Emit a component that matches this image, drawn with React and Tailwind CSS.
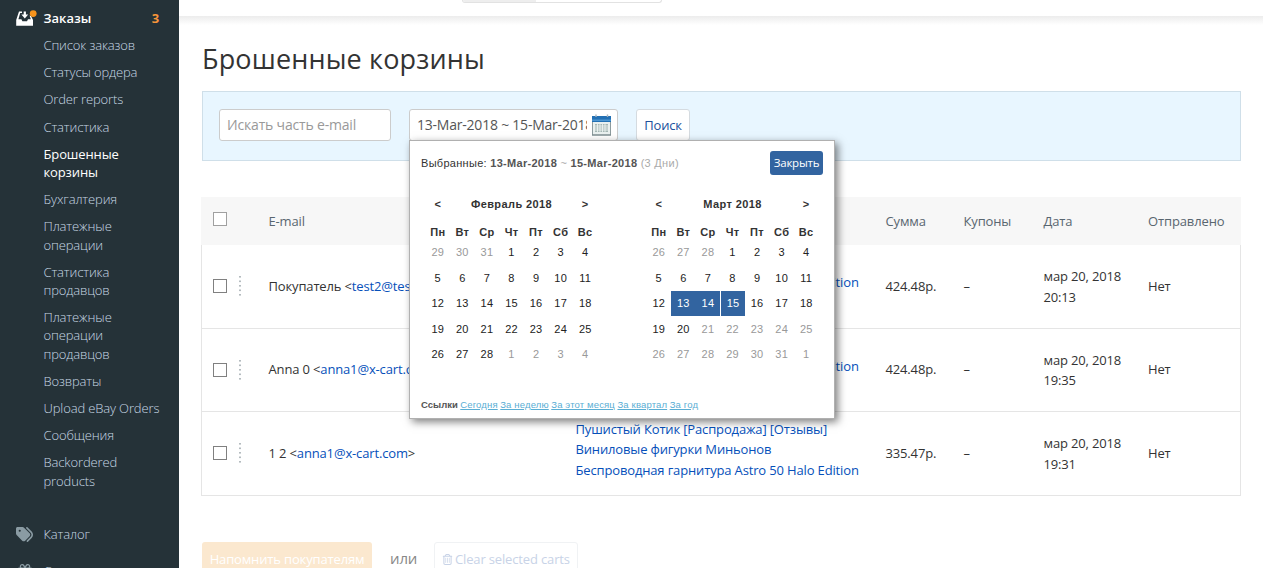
import React from 'react';
import { FaTags, FaGift, FaRegTrashCan } from 'react-icons/fa6';

const menu = [
  { lines: ['Список заказов'] },
  { lines: ['Статусы ордера'] },
  { lines: ['Order reports'] },
  { lines: ['Статистика'] },
  { lines: ['Брошенные', 'корзины'], active: true },
  { lines: ['Бухгалтерия'] },
  { lines: ['Платежные', 'операции'] },
  { lines: ['Статистика', 'продавцов'] },
  { lines: ['Платежные', 'операции', 'продавцов'] },
  { lines: ['Возвраты'] },
  { lines: ['Upload eBay Orders'] },
  { lines: ['Сообщения'] },
  { lines: ['Backordered', 'products'] },
];

const weekdays = ['Пн', 'Вт', 'Ср', 'Чт', 'Пт', 'Сб', 'Вс'];

const months = [
  {
    title: 'Февраль 2018',
    days: [29, 30, 31, ...Array.from({ length: 28 }, (_, i) => i + 1), 1, 2, 3, 4],
    from: 3,
    to: 30,
    selected: [],
  },
  {
    title: 'Март 2018',
    days: [26, 27, 28, ...Array.from({ length: 31 }, (_, i) => i + 1), 1],
    from: 3,
    to: 22,
    selected: [15, 16, 17],
  },
];

const rows = [
  {
    name: 'Покупатель',
    email: 'test2@test.com',
    items: ['Беспроводная гарнитура Astro 50 Halo Edition'],
    total: '424.48р.',
    time: '20:13',
  },
  {
    name: 'Anna 0',
    email: 'anna1@x-cart.com',
    items: ['Беспроводная гарнитура Astro 50 Halo Edition'],
    total: '424.48р.',
    time: '19:35',
  },
  {
    name: '1 2',
    email: 'anna1@x-cart.com',
    items: [
      'Пушистый Котик [Распродажа] [Отзывы]',
      'Виниловые фигурки Миньонов',
      'Беспроводная гарнитура Astro 50 Halo Edition',
    ],
    total: '335.47р.',
    time: '19:31',
  },
];

const columns = 'grid grid-cols-[67.5px_307px_310px_78px_80px_104.5px_92px]';

function InboxIcon() {
  return (
    <svg width="21" height="18" viewBox="0 0 21 18" className="block">
      <path d="M3 2.5H6V4H4.2L2.4 10.2H5.4L6.4 12.2H11L12 10.2H14.8L13.6 6.5L15 7L17 11V16.8H0.2V11Z" fill="#fff" />
      <path d="M7.7 2.5H9.9V5.6H12.2L8.8 9.4L5.4 5.6H7.7Z" fill="#fff" />
      <circle cx="17.2" cy="4.6" r="3.4" fill="#f7941d" />
    </svg>
  );
}

function CalendarIcon() {
  return (
    <svg width="20" height="22" viewBox="0 0 20 22" className="block">
      <rect x="0.5" y="2.5" width="18" height="18.5" fill="#e9f0ef" stroke="#8c9b9e" />
      <rect x="0" y="2" width="19" height="6" fill="#2270b4" />
      <rect x="0" y="5.5" width="19" height="1.5" fill="#4d96d0" />
      <path d="M4 0.5V3M15.5 0.5V3" stroke="#a8b4bc" strokeWidth="1.4" />
      <rect x="3" y="10" width="13" height="8" fill="#a5b7b5" />
      <path d="M3 12H16M3 14H16M3 16H16M5.5 10V18M8 10V18M10.5 10V18M13 10V18" stroke="#f3f7f6" strokeWidth="0.8" />
      <path d="M0 21H19" stroke="#77878a" />
    </svg>
  );
}

function Checkbox({ light }) {
  return <span className={'block size-[14px] border bg-white ' + (light ? 'border-[#a0a0a0]' : 'border-[#808080]')} />;
}

function DragHandle() {
  return (
    <svg width="2" height="20" viewBox="0 0 2 20" className="block">
      {[0, 4.5, 9, 13.5, 18].map((y) => <rect key={y} y={y} width="2" height="1.6" fill="#b4bbbf" />)}
    </svg>
  );
}

function Sidebar() {
  return (
    <aside className="h-full w-[179px] shrink-0 overflow-hidden bg-[#253238] text-[13px] leading-[18.2px] tracking-[-0.13px] text-[#c8d8e5]">
      <div className="flex h-[36px] items-center pl-4 font-semibold text-white">
        <span className="w-[27.5px]"><InboxIcon /></span>
        <span className="flex-1 tracking-[0px]">Заказы</span>
        <span className="pr-5 font-bold text-[#f7953a]">3</span>
      </div>
      <nav className="flex flex-col gap-[9px] pl-[43.5px]">
        {menu.map((item, i) => (
          <div key={i} className={item.active ? 'text-white' : 'font-light'}>
            {item.lines.map((l) => <div key={l} className="whitespace-nowrap">{l}</div>)}
          </div>
        ))}
      </nav>
      <div className="mt-[35.5px] flex items-center pl-4">
        <FaTags className="mr-[10.5px] text-[#8a9ba3]" size={17} />
        <span className="font-light">Каталог</span>
      </div>
      <div className="mt-[18px] flex items-center pl-[18px]">
        <FaGift className="mr-[11.5px] text-[#8a9ba3]" size={14} />
        <span className="font-light">Скидки</span>
      </div>
    </aside>
  );
}

function Month({ month }) {
  return (
    <div className="w-[172px]">
      <div className="flex h-[18px] items-center justify-between pr-[9px] pl-[9px] font-bold tracking-[0.4px]">
        <span>&lt;</span>
        <span>{month.title}</span>
        <span>&gt;</span>
      </div>
      <div className="mt-[11px] grid h-[17px] grid-cols-7 items-center text-center font-bold tracking-[0.3px]">
        {weekdays.map((d) => <span key={d}>{d}</span>)}
      </div>
      <div className="-mt-px grid grid-cols-7 gap-y-[0.5px] text-center tracking-[0.2px]">
        {month.days.map((d, i) => {
          const chosen = month.selected.includes(i);
          const tone = chosen ? 'bg-[#3264a0] text-white' : i < month.from || i > month.to ? 'text-[#999]' : 'text-[#222]';
          return (
            <span key={i} className={'h-[25px] leading-[25px] ' + tone + (chosen && d === 15 ? ' border-l border-white' : '')}>
              {d}
            </span>
          );
        })}
      </div>
    </div>
  );
}

function DatePicker() {
  return (
    <div className="absolute top-[30px] left-[-1px] z-10 flex h-[279px] w-[426px] flex-col border border-[#b0b0b0] bg-white px-[11px] font-['Liberation_Sans',Arial,sans-serif] text-[11px] tracking-[0px] text-[#333] shadow-[3px_3px_8px_rgba(0,0,0,0.5)]">
      <div className="mt-[10px] flex h-[24px] items-center justify-between">
        <div className="pt-px whitespace-nowrap tracking-[0.29px]">
          Выбранные: <b className="text-[#555]">13-Mar-2018</b> <span className="text-[#aaa]">~</span>{' '}
          <b className="text-[#555]">15-Mar-2018</b> <span className="text-[#aaa]">(3 Дни)</span>
        </div>
        <button className="h-[24px] w-[53px] rounded-[3px] bg-[#3264a0] font-['Open_Sans',sans-serif] text-[11.5px] tracking-[-0.25px] text-white">
          Закрыть
        </button>
      </div>
      <div className="mt-[20px] flex justify-between pr-[4.5px] pl-[4.5px]">
        {months.map((m) => <Month key={m.title} month={m} />)}
      </div>
      <div className="mt-auto mb-[6px] flex h-[14px] items-center gap-[2.5px] text-[9.5px] whitespace-nowrap">
        <b className="text-[#555]">Ссылки</b>
        {['Сегодня', 'За неделю', 'За этот месяц', 'За квартал', 'За год'].map((t) => (
          <a key={t} className="tracking-[0.15px] text-[#5aaed4] underline">{t}</a>
        ))}
      </div>
    </div>
  );
}

export default function App() {
  return (
    <div className="flex h-[568px] w-[1263px] overflow-hidden bg-white font-['Open_Sans','Noto_Sans',sans-serif] text-[13px] text-[#333]">
      <Sidebar />
      <div className="flex min-w-0 flex-1 flex-col">
        <header className="h-[16px] shrink-0 pl-[283px]">
          <div className="flex h-[3px] w-[200px] overflow-hidden rounded-b-[3px] border border-t-0 border-[#e2e2e2]">
            <span className="w-[73px] bg-[#eee]" />
          </div>
        </header>
        <main className="flex flex-1 flex-col bg-[linear-gradient(#ececec,#ffffff_9px)] pr-[22px] pl-[23px]">
          <h1 className="mt-[23px] h-[40px] text-[27px] leading-[40px] tracking-[0.15px]">Брошенные корзины</h1>
          <section className="mt-[12px] flex h-[70px] shrink-0 items-start border border-[#cfdfe9] bg-[#e8f6ff] pt-[17px] pl-[16px] text-[14px] tracking-[-0.18px]">
            <div className="flex h-[32px] w-[172px] items-center rounded-[3px] border border-[#ccc] bg-white px-[7px] pb-[2px] text-[#999]">
              Искать часть e-mail
            </div>
            <div className="relative ml-[18px] flex h-[32px] w-[209px] items-center rounded-[3px] border border-[#ccc] bg-white pl-[7px] text-[#555]">
              <span className="w-[170px] overflow-hidden pb-[2px] tracking-[-0.22px] whitespace-nowrap">13-Mar-2018 ~ 15-Mar-2018</span>
              <span className="ml-[5px] pb-px"><CalendarIcon /></span>
              <DatePicker />
            </div>
            <button className="ml-[18px] h-[32px] w-[54px] rounded-[3px] border border-[#d5dbe0] bg-white pt-px text-[13px] text-[#21509c]">
              Поиск
            </button>
          </section>
          <section className="mt-[36px] -ml-px tracking-[-0.15px]">
            <div className={columns + ' h-[48px] items-center bg-[#f7f7f7] pt-[2px] text-[#596670]'}>
              <span className="pb-[6px] pl-[12px]"><Checkbox light /></span>
              <span>E-mail</span>
              <span />
              <span>Сумма</span>
              <span>Купоны</span>
              <span>Дата</span>
              <span className="tracking-[-0.12px]">Отправлено</span>
            </div>
            <div className="border-x border-[#e5e5e5]">
              {rows.map((r, i) => (
                <div key={i} className={columns + ' -ml-px h-[83.5px] items-center border-b border-[#e5e5e5]'}>
                  <span className="flex items-center gap-[12px] pl-[12px]">
                    <Checkbox />
                    <DragHandle />
                  </span>
                  <span className="whitespace-nowrap">
                    {r.name} &lt;<a className="text-[#0650ba]">{r.email}</a>&gt;
                  </span>
                  <span className="-mt-[8px] leading-[20.5px] whitespace-nowrap text-[#0650ba]">
                    {r.items.map((t) => <div key={t}>{t}</div>)}
                  </span>
                  <span>{r.total}</span>
                  <span>–</span>
                  <span className="pt-px leading-[20.6px]">мар 20, 2018<br />{r.time}</span>
                  <span>Нет</span>
                </div>
              ))}
            </div>
          </section>
          <footer className="mt-[46px] flex h-[34px] shrink-0 items-center text-[13px] tracking-[-0.15px]">
            <button className="h-[34px] w-[170px] rounded-[3px] bg-[#fbe8cf] pt-[2px] text-white">Напомнить покупателям</button>
            <span className="w-[62px] pb-px pl-[18px] text-[15px] text-[#888]">или</span>
            <button className="flex h-[34px] w-[144px] items-center gap-[2px] rounded-[3px] border border-[#f0f2f4] pt-[2px] pl-[7px] text-[#c8d3e7]">
              <FaRegTrashCan size={11} />
              <span className="whitespace-nowrap">Clear selected carts</span>
            </button>
          </footer>
        </main>
      </div>
    </div>
  );
}
